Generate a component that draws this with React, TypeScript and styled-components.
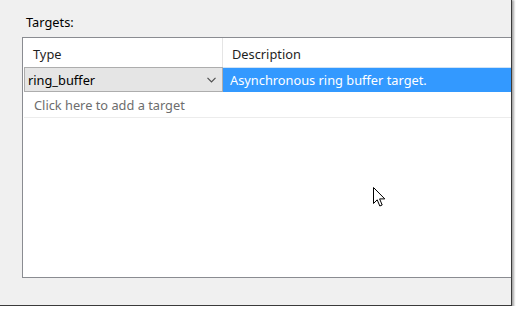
import React from "react";
import styled, { createGlobalStyle } from "styled-components";

const Global = createGlobalStyle`
  html, body { margin: 0; padding: 0; background: #ffffff; }
  body { font-family: "Noto Sans", "Open Sans", sans-serif; font-size: 12.8px; }
`;

const Frame = styled.div`
  position: relative;
  width: 512px;
  height: 306px;
  background: #f0f0f0;
  border-right: 1px solid #3a3a3a;
  border-bottom: 1px solid #3a3a3a;
  box-shadow: 1px 1px 2px 1px rgba(0, 0, 0, 0.35);
  overflow: hidden;
  padding: 14px 0 0 22px;
  box-sizing: border-box;
`;

const Label = styled.div`
  color: #000;
  line-height: 17px;
  padding-left: 4px;
  height: 23px;
`;

const Grid = styled.div`
  width: 520px;
  height: 241px;
  box-sizing: border-box;
  border: 1px solid #8a8c91;
  background: #ffffff;
  display: flex;
  flex-direction: column;
`;

const Row = styled.div<{ $h: number; $line?: boolean }>`
  display: grid;
  grid-template-columns: 200px 1fr;
  height: ${(p) => p.$h}px;
  box-sizing: border-box;
  border-bottom: ${(p) => (p.$line ? "1px solid #ececec" : "none")};
  margin-left: ${(p) => (p.$line ? "1px" : "0")};
`;

const HeadCell = styled.div<{ $divider?: boolean }>`
  display: flex;
  align-items: center;
  padding-top: 2px;
  padding-left: ${(p) => (p.$divider ? "9px" : "10px")};
  color: #1e1e1e;
  border-right: ${(p) => (p.$divider ? "none" : "1px solid #e5e5e5")};
`;

const Combo = styled.div`
  margin-left: 1px;
  display: flex;
  align-items: center;
  justify-content: space-between;
  background: #e5e5e5;
  border: 1px solid #adadad;
  padding: 0 6px 0 3px;
  color: #000;
`;

const Selected = styled.div`
  display: flex;
  align-items: center;
  background: #3399ff;
  color: #ffffff;
  padding-left: 7px;
  border-top: 1px solid #cfe3f7;
`;

const Hint = styled.div`
  display: flex;
  align-items: center;
  padding-left: 10px;
  color: #6d6d6d;
  grid-column: 1 / span 2;
`;

const Cursor = styled.svg`
  position: absolute;
  left: 373px;
  top: 187px;
`;

export default function App() {
  return (
    <>
      <Global />
      <Frame>
        <Label>Targets:</Label>
        <Grid>
          <Row $h={29}>
            <HeadCell>Type</HeadCell>
            <HeadCell $divider>Description</HeadCell>
          </Row>
          <Row $h={25}>
            <Combo>
              <span>ring_buffer</span>
              <svg width="9" height="6" viewBox="0 0 9 6">
                <path d="M0.5 0.8 L4.5 4.8 L8.5 0.8" fill="none" stroke="#505050" strokeWidth="1.2" />
              </svg>
            </Combo>
            <Selected>Asynchronous ring buffer target.</Selected>
          </Row>
          <Row $h={26} $line>
            <Hint>Click here to add a target</Hint>
          </Row>
        </Grid>
        <Cursor width="14" height="22" viewBox="0 0 14 22">
          <path
            d="M0.5 0.5 L0.5 16.5 L4.2 12.8 L6.8 19 L9.2 18 L6.6 11.9 L11.8 11.9 Z"
            fill="#ffffff"
            stroke="#000000"
            strokeWidth="1"
            strokeLinejoin="miter"
          />
        </Cursor>
      </Frame>
    </>
  );
}
